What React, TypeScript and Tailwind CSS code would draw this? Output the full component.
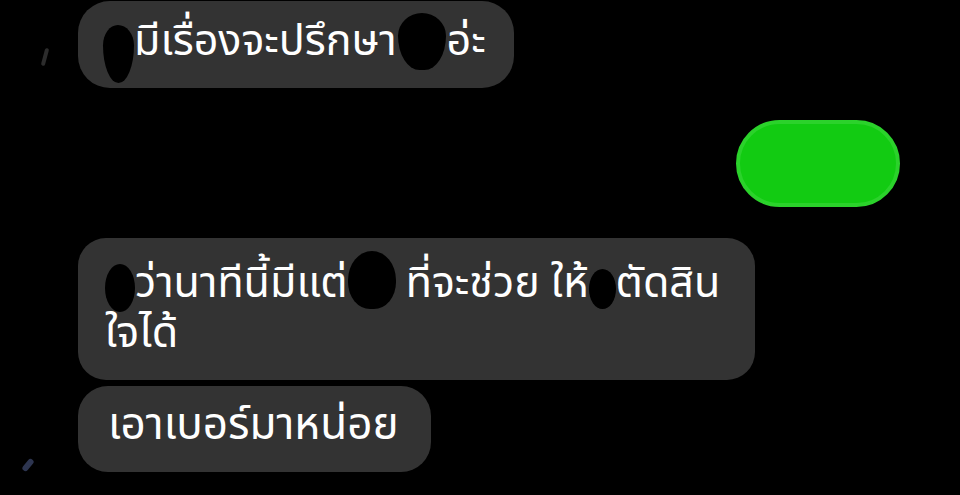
import React from 'react';

const font = { fontFamily: '"Noto Sans Thai", "Noto Sans", Tahoma, sans-serif' };

// black scribble that hides a name in the screenshot
const Blob = ({ className }: { className: string }) => (
    <span className={`inline-block bg-black align-middle shrink-0 ${className}`}></span>
);

const Bubble = ({ className, children }: { className: string; children: React.ReactNode }) => (
    <div className={`self-start bg-[#333333] ${className}`}>{children}</div>
);

const App = () => {
    return (
        <div className="w-[960px] h-[495px] bg-black overflow-hidden relative text-white" style={font}>
            {/* faint bits of the avatar edges at the left */}
            <div className="absolute left-[43px] top-[48px] w-[4px] h-[18px] rounded-full bg-[#2c2c2c] rotate-[15deg]"></div>
            <div className="absolute left-[25px] top-[458px] w-[6px] h-[14px] rotate-[40deg] rounded-full bg-[#2d3550]"></div>

            <div className="flex flex-col pl-[78px] pr-[60px] pt-[1px]">
                <Bubble className="h-[87px] rounded-[32px] pl-[25px] pr-[28px] flex items-center text-[43px] leading-none">
                    <Blob className="w-[31px] h-[58px] mt-[18px] rounded-[48%_52%_50%_50%/35%_35%_65%_65%]" />
                    <span className="-mt-[6px]">มีเรื่องจะปรึกษา</span>
                    <Blob className="w-[48px] h-[57px] -mt-[6px] mx-[1px] rounded-[50%_50%_45%_45%/40%_40%_60%_60%]" />
                    <span className="-mt-[6px]">อ่ะ</span>
                </Bubble>

                <div className="self-end mt-[32px] w-[164px] h-[87px] rounded-full bg-[#12cb12] border-[4px] border-[#2bd22b]"></div>

                <Bubble className="mt-[31px] w-[677px] h-[142px] rounded-[28px] pl-[27px] pt-[21px] text-[43px] leading-[50px] whitespace-nowrap">
                    <Blob className="w-[30px] h-[48px] -my-[10px] translate-y-[3px] rounded-[50%]" />
                    ว่านาทีนี้มีแต่
                    <Blob className="w-[48px] h-[58px] -my-[10px] mr-[10px] -translate-y-[5px] rounded-[50%_50%_46%_46%]" />
                    ที่จะช่วย ให้
                    <Blob className="w-[27px] h-[40px] -my-[10px] translate-y-[4px] rounded-[50%]" />
                    ตัดสิน
                    <br />
                    ใจได้
                </Bubble>

                <Bubble className="mt-[6px] h-[86px] rounded-[30px] pl-[30px] pr-[32px] flex items-center text-[44px] leading-none">
                    <span className="-mt-[6px]">เอาเบอร์มาหน่อย</span>
                </Bubble>
            </div>
        </div>
    );
};

export default App;
